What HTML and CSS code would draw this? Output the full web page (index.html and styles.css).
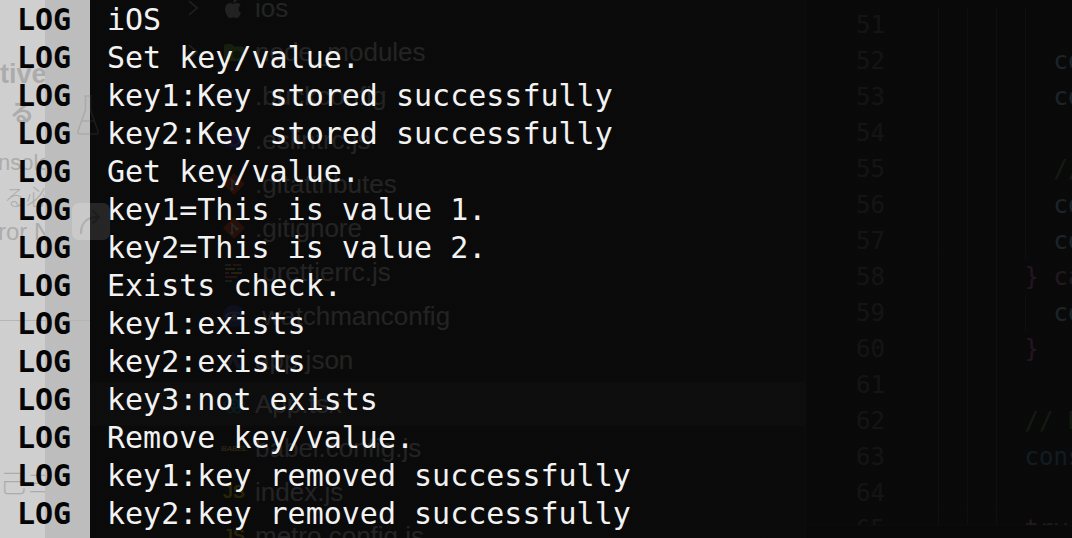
FILE: index.html
```html
<!DOCTYPE html>
<html lang="en">
<head>
<meta charset="utf-8">
<title>Console log</title>
<link rel="stylesheet" href="styles.css">
</head>
<body>
<div class="stage">
  <div class="backdrop">
    <div class="app-side">
      <div class="t-tive">tive</div>
      <div class="t-ru">る</div>
      <div class="t-nsole">nsole</div>
      <div class="t-ruhitsu">る必</div>
      <div class="t-ror">ror N</div>
      <div class="rule rule-side"></div>
      <div class="t-ki">己ヨ</div>
    </div>
    <div class="app-main">
      <svg class="flask" viewBox="0 0 24 44" width="24" height="44">
        <path d="M8 3h8M9.5 3v14L2 38c-.6 1.6.2 3 2 3h16c1.8 0 2.6-1.4 2-3L14.5 17V3M6 28h12" fill="none" stroke="#9a9a9a" stroke-width="1.6" stroke-linejoin="round"/>
      </svg>
      <div class="share">
        <svg viewBox="0 0 38 37" width="38" height="37">
          <path d="M9 30c0-10 6-16 17-16M21 8l6 6-6 6" fill="none" stroke="#a8a8a8" stroke-width="2.4" stroke-linecap="round" stroke-linejoin="round"/>
        </svg>
      </div>
      <div class="rule rule-main"></div>
    </div>
    <div class="sidebar">
      <div class="tree">
        <div class="row">
          <svg class="chev" viewBox="0 0 20 24"><path d="M6 5l8 7-8 7" fill="none" stroke="#c5c5c5" stroke-width="1.6"/></svg>
          <svg class="icon" viewBox="0 0 24 24"><path d="M16.6 12.7c0-2.5 2-3.6 2.1-3.7-1.2-1.7-3-1.9-3.6-1.900-1.5-.2-3 .9-3.8.9-.8 0-2-.9-3.3-.9-1.7 0-3.2 1-4.1 2.5-1.8 3-.5 7.5 1.2 10 .8 1.2 1.8 2.6 3.1 2.5 1.2 0 1.7-.8 3.2-.8s1.9.8 3.2.8c1.3 0 2.2-1.2 3-2.4.9-1.4 1.300-2.800 1.400-2.900-.1 0-2.400-.9-2.400-4.100zM14.2 5.3c.7-.8 1.100-2 1-3.100-1 0-2.200.7-2.900 1.500-.6.7-1.200 1.900-1 3 1.100.1 2.200-.6 2.900-1.400z" fill="#c8c8c8"/></svg>
          <span class="name">ios</span>
        </div>
        <div class="row">
          <svg class="chev" viewBox="0 0 20 24"><path d="M6 5l8 7-8 7" fill="none" stroke="#c5c5c5" stroke-width="1.6"/></svg>
          <svg class="icon" viewBox="0 0 24 24"><path d="M2 6c0-1 .8-2 2-2h6l2 2.5h8c1.1 0 2 .9 2 2V19c0 1.1-.9 2-2 2H4c-1.1 0-2-.9-2-2z" fill="#7cb342"/><path d="M15 10l4 2.3v4.6L15 19.2l-4-2.3v-4.6z" fill="#33691e"/></svg>
          <span class="name">node_modules</span>
        </div>
        <div class="row">
          <span class="chev"></span>
          <svg class="icon" viewBox="0 0 24 24"><path d="M8 4a9 9 0 0 0 0 16M12 6a7 7 0 0 0 0 12M16 8a5 5 0 0 0 0 8" fill="none" stroke="#4f7df0" stroke-width="2"/></svg>
          <span class="name">.buckconfig</span>
        </div>
        <div class="row">
          <span class="chev"></span>
          <svg class="icon" viewBox="0 0 24 24"><path d="M12 1.5l9.5 5.3v10.4L12 22.5l-9.5-5.3V6.8z" fill="#4b32c3"/><path d="M12 6l5 2.9v6.2L12 18l-5-2.9V8.9z" fill="none" stroke="#8080f2" stroke-width="1.5"/></svg>
          <span class="name">.eslintrc.js</span>
        </div>
        <div class="row">
          <span class="chev"></span>
          <svg class="icon" viewBox="0 0 24 24"><path d="M12 1l11 11-11 11L1 12z" fill="#e64a19"/><path d="M9 7l6 6M10 8v9" stroke="#fff" stroke-width="1.6"/><circle cx="10" cy="17" r="1.6" fill="#fff"/><circle cx="15" cy="13" r="1.6" fill="#fff"/></svg>
          <span class="name">.gitattributes</span>
        </div>
        <div class="row">
          <span class="chev"></span>
          <svg class="icon" viewBox="0 0 24 24"><path d="M12 1l11 11-11 11L1 12z" fill="#e64a19"/><path d="M9 7l6 6M10 8v9" stroke="#fff" stroke-width="1.6"/><circle cx="10" cy="17" r="1.6" fill="#fff"/><circle cx="15" cy="13" r="1.6" fill="#fff"/></svg>
          <span class="name">.gitignore</span>
        </div>
        <div class="row">
          <span class="chev"></span>
          <svg class="icon" viewBox="0 0 24 24"><path d="M3 5h6" stroke="#56b3b4" stroke-width="2"/><path d="M11 5h8" stroke="#ea5e5e" stroke-width="2"/><path d="M3 9h10" stroke="#f7ba3e" stroke-width="2"/><path d="M15 9h5" stroke="#56b3b4" stroke-width="2"/><path d="M3 13h4" stroke="#bf85bf" stroke-width="2"/><path d="M9 13h11" stroke="#f7ba3e" stroke-width="2"/><path d="M3 17h12" stroke="#ea5e5e" stroke-width="2"/><path d="M3 21h7" stroke="#56b3b4" stroke-width="2"/></svg>
          <span class="name">.prettierrc.js</span>
        </div>
        <div class="row">
          <span class="chev"></span>
          <svg class="icon" viewBox="0 0 24 24"><circle cx="12" cy="12" r="11" fill="#3949ab"/><path d="M4 12c4-5 12-5 16 0-4 5-12 5-16 0z" fill="none" stroke="#9fa8da" stroke-width="1.5"/><circle cx="12" cy="12" r="2.5" fill="#9fa8da"/></svg>
          <span class="name">.watchmanconfig</span>
        </div>
        <div class="row">
          <span class="chev"></span>
          <svg class="icon" viewBox="0 0 24 24"><path d="M11 3L4 19h4l3-7 4 9h5z" fill="#5c6bc0"/></svg>
          <span class="name">app.json</span>
        </div>
        <div class="row sel">
          <span class="chev"></span>
          <svg class="icon" viewBox="0 0 24 24"><g fill="none" stroke="#00bcd4" stroke-width="1.4"><ellipse cx="12" cy="12" rx="10" ry="4"/><ellipse cx="12" cy="12" rx="10" ry="4" transform="rotate(60 12 12)"/><ellipse cx="12" cy="12" rx="10" ry="4" transform="rotate(120 12 12)"/></g><circle cx="12" cy="12" r="1.8" fill="#00bcd4"/></svg>
          <span class="name">App.tsx</span>
        </div>
        <div class="row">
          <span class="chev"></span>
          <span class="icon babel">BABEL</span>
          <span class="name">babel.config.js</span>
        </div>
        <div class="row">
          <span class="chev"></span>
          <span class="icon js">JS</span>
          <span class="name">index.js</span>
        </div>
        <div class="row">
          <span class="chev"></span>
          <span class="icon js">JS</span>
          <span class="name">metro.config.js</span>
        </div>
      </div>
    </div>
    <div class="editor">
      <div class="edit-body">
        <div class="gutter">
          <div>51</div><div>52</div><div>53</div><div>54</div><div>55</div>
          <div>56</div><div>57</div><div>58</div><div>59</div><div>60</div>
          <div>61</div><div>62</div><div>63</div><div>64</div><div>65</div>
        </div>
        <div class="code">
          <div class="ln g"> </div>
          <div class="ln g">          <span class="var">console</span>.log(<span class="str">'key1:Key stored successfully'</span>);</div>
          <div class="ln g">          <span class="var">console</span>.log(<span class="str">'key2:Key stored successfully'</span>);</div>
          <div class="ln g"> </div>
          <div class="ln g">          <span class="cmt">// Get key/value.</span></div>
          <div class="ln g">          <span class="var">console</span>.log(value1);</div>
          <div class="ln g">          <span class="var">console</span>.log(value2);</div>
          <div class="ln">        <span class="brace">}</span> <span class="kw">catch</span> (e) {</div>
          <div class="ln g">          <span class="var">console</span>.log(e);</div>
          <div class="ln">        <span class="brace">}</span></div>
          <div class="ln"> </div>
          <div class="ln">        <span class="cmt">// Remove key/value.</span></div>
          <div class="ln">        <span class="const">const</span> removed = <span class="kw">await</span> remove();</div>
          <div class="ln"> </div>
          <div class="ln">        <span class="kw">try</span> {</div>
        </div>
      </div>
      <div class="panel"></div>
    </div>
  </div>

  <div class="console">
    <div class="entry"><span class="lv">LOG</span><span class="msg">iOS</span></div>
    <div class="entry"><span class="lv">LOG</span><span class="msg">Set key/value.</span></div>
    <div class="entry"><span class="lv">LOG</span><span class="msg">key1:Key stored successfully</span></div>
    <div class="entry"><span class="lv">LOG</span><span class="msg">key2:Key stored successfully</span></div>
    <div class="entry"><span class="lv">LOG</span><span class="msg">Get key/value.</span></div>
    <div class="entry"><span class="lv">LOG</span><span class="msg">key1=This is value 1.</span></div>
    <div class="entry"><span class="lv">LOG</span><span class="msg">key2=This is value 2.</span></div>
    <div class="entry"><span class="lv">LOG</span><span class="msg">Exists check.</span></div>
    <div class="entry"><span class="lv">LOG</span><span class="msg">key1:exists</span></div>
    <div class="entry"><span class="lv">LOG</span><span class="msg">key2:exists</span></div>
    <div class="entry"><span class="lv">LOG</span><span class="msg">key3:not exists</span></div>
    <div class="entry"><span class="lv">LOG</span><span class="msg">Remove key/value.</span></div>
    <div class="entry"><span class="lv">LOG</span><span class="msg">key1:key removed successfully</span></div>
    <div class="entry"><span class="lv">LOG</span><span class="msg">key2:key removed successfully</span></div>
  </div>
</div>
</body>
</html>
```

FILE: styles.css
```css
* { box-sizing: border-box; margin: 0; padding: 0; }

html, body {
  width: 1072px;
  height: 538px;
  overflow: hidden;
  background: #0a0a0a;
}

.stage {
  display: grid;
  width: 1072px;
  height: 538px;
  overflow: hidden;
}

.backdrop, .console { grid-area: 1 / 1; }

/* ---------- underlying windows ---------- */
.backdrop {
  display: grid;
  grid-template-columns: 45px 45px 715px 1fr;
  height: 538px;
  overflow: hidden;
  position: relative;
  z-index: 0;
}

.app-side {
  background: #f5f5f5;
  overflow: hidden;
  display: flex;
  flex-direction: column;
  color: #9c9c9c;
  font-family: "Liberation Sans", "Noto Sans CJK JP", sans-serif;
  white-space: nowrap;
}
.t-tive { margin-top: 59px; font-size: 27px; font-weight: bold; line-height: 30px; }
.t-ru { margin-top: 8px; font-size: 24px; font-weight: bold; line-height: 28px; padding-left: 10px; font-family: "Noto Sans CJK JP", sans-serif; }
.t-nsole { margin-top: 25px; font-size: 22px; line-height: 26px; margin-left: -2px; }
.t-ruhitsu { margin-top: 6px; font-size: 22px; line-height: 26px; padding-left: 4px; font-family: "Noto Sans CJK JP", sans-serif; font-weight: 300; }
.t-ror { margin-top: 10px; font-size: 24px; line-height: 28px; margin-left: -2px; }
.rule { height: 1px; background: #b5b5b5; flex: none; }
.rule-side { margin-top: 74px; }
.t-ki { margin-top: 146px; font-size: 26px; line-height: 30px; font-family: "Noto Sans CJK JP", sans-serif; font-weight: 300; }

.app-main {
  background: #c8c8c8;
  display: flex;
  flex-direction: column;
}
.flask {
  display: block;
  flex: none;
  margin-top: 93px;
  margin-left: 31px;
  position: relative;
  z-index: 1;
}
.share {
  flex: none;
  width: 38px;
  height: 37px;
  margin-top: 66px;
  margin-left: 27px;
  border-radius: 7px;
  background: #e6e6e6;
  position: relative;
  z-index: 1;
}
.share svg { display: block; }
.rule-main { margin-top: 80px; }

.sidebar {
  background: #252526;
  overflow: hidden;
  font-family: "Liberation Sans", Arial, sans-serif;
  font-size: 26px;
  color: #d6d6d6;
}
.tree { margin-top: -14px; }
.row {
  display: flex;
  align-items: center;
  height: 44px;
  padding-left: 93px;
  white-space: nowrap;
}
.row.sel { background: #3a3a40; }
.chev { width: 20px; height: 24px; margin-right: 19px; flex: none; display: block; }
.icon {
  width: 24px;
  height: 24px;
  margin-right: 9px;
  flex: none;
  display: flex;
  align-items: center;
  justify-content: center;
}
.babel {
  font-size: 8px;
  font-style: italic;
  font-weight: bold;
  color: #f5da55;
  letter-spacing: -0.3px;
}
.js {
  font-size: 18px;
  font-weight: bold;
  color: #f5de19;
  font-family: "Liberation Sans", sans-serif;
}
.name { line-height: 44px; }

.editor {
  background: #1e1e1e;
  border-left: 1px solid #3c3c3c;
  display: grid;
  grid-template-rows: 525px 1fr;
  overflow: hidden;
}
.edit-body {
  display: grid;
  grid-template-columns: 79px 1fr;
  align-content: start;
  overflow: hidden;
  padding-top: 7px;
  font-family: "DejaVu Sans Mono", "Liberation Mono", monospace;
  font-size: 24px;
  line-height: 36px;
}
.gutter { color: #6a6a6a; text-align: right; }
.gutter div { height: 36px; }
.code {
  padding-left: 24px;
  color: #d4d4d4;
  overflow: hidden;
  background-image:
    linear-gradient(#4a4a4a, #4a4a4a),
    linear-gradient(#4a4a4a, #4a4a4a),
    linear-gradient(#4a4a4a, #4a4a4a);
  background-size: 1px 100%;
  background-repeat: no-repeat;
  background-position: 53px 0, 82px 0, 111px 0;
}
.ln { height: 36px; white-space: pre; }
.ln.g {
  background-image: linear-gradient(#4a4a4a, #4a4a4a);
  background-size: 1px 100%;
  background-repeat: no-repeat;
  background-position: 116px 0;
}
.var { color: #9cdcfe; }
.str { color: #ce9178; }
.cmt { color: #6a9955; }
.kw { color: #c586c0; }
.const { color: #569cd6; }
.brace { color: #da70d6; }
.panel { background: #181818; border-top: 1px solid #2e2e2e; }

/* ---------- console overlay ---------- */
.console {
  position: relative;
  z-index: 2;
  display: flex;
  flex-direction: column;
  padding-top: 1px;
  background: linear-gradient(to right, rgba(182, 182, 182, 0.6) 90px, rgba(6, 6, 6, 0.86) 90px);
  font-family: "DejaVu Sans Mono", "Liberation Mono", monospace;
  font-size: 30px;
  line-height: 38px;
}
.entry {
  display: grid;
  grid-template-columns: 90px 1fr;
  height: 38px;
}
.lv {
  padding-left: 17px;
  font-weight: bold;
  color: #050505;
}
.msg {
  padding-left: 17px;
  color: #f2f2f2;
  white-space: pre;
}
```
